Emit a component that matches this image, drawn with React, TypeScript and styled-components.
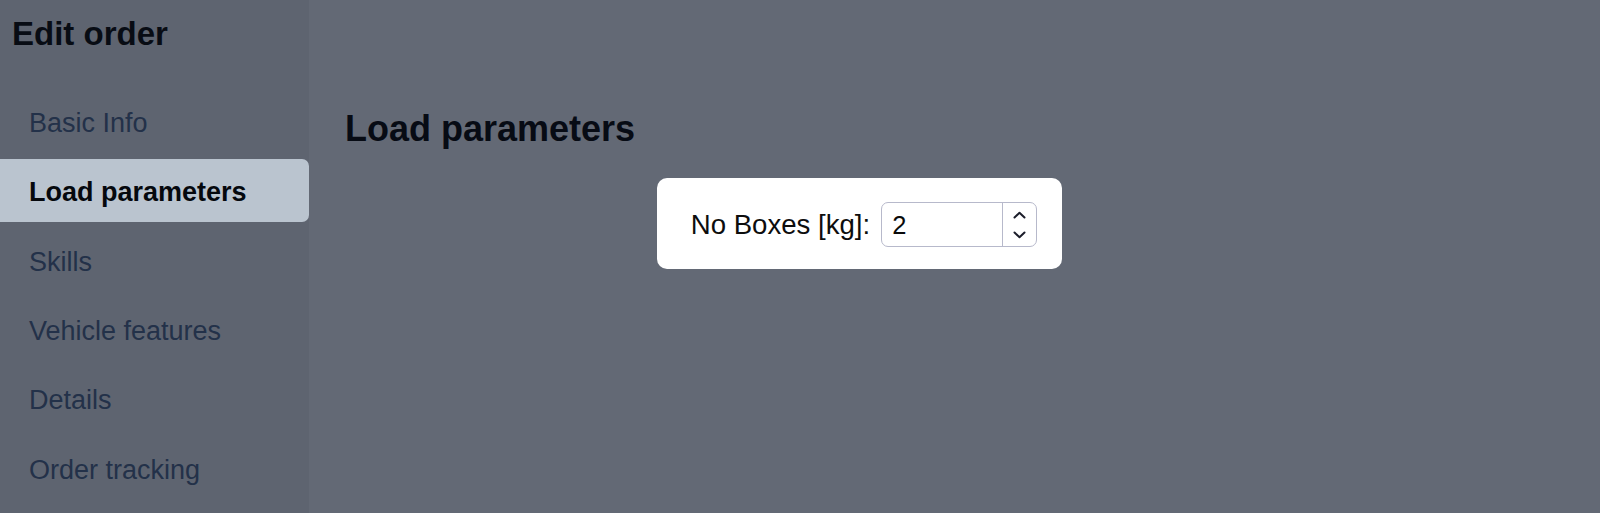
import React from "react";
import styled, { createGlobalStyle } from "styled-components";

const GlobalStyle = createGlobalStyle`
  html, body {
    margin: 0;
    padding: 0;
    height: 100%;
  }
  body {
    font-family: "Liberation Sans", Arial, sans-serif;
    background: #636975;
  }
  #root {
    height: 513px;
  }
`;

const Layout = styled.div`
  display: grid;
  grid-template-columns: 309px 1fr;
  height: 513px;
  overflow: hidden;
`;

const Sidebar = styled.aside`
  background: #5e6470;
  display: flex;
  flex-direction: column;
`;

const SidebarTitle = styled.h1`
  margin: 0;
  padding: 14px 0 0 12px;
  font-size: 33px;
  line-height: 40px;
  font-weight: 700;
  color: #080c14;
`;

const Nav = styled.nav`
  display: flex;
  flex-direction: column;
  gap: 6.3px;
  margin-top: 35.7px;
`;

const NavItem = styled.div<{ $active?: boolean }>`
  height: 63px;
  box-sizing: border-box;
  display: flex;
  align-items: center;
  padding: 5px 0 0 29px;
  font-size: 27px;
  font-weight: ${(p) => (p.$active ? 700 : 400)};
  color: ${(p) => (p.$active ? "#05080d" : "#233149")};
  background: ${(p) => (p.$active ? "#bac4cf" : "transparent")};
  border-radius: 0 7px 7px 0;
`;

const Main = styled.main`
  background: #636975;
  padding: 106.5px 0 0 36px;
`;

const Content = styled.div`
  width: 1029px;
  display: flex;
  flex-direction: column;
  align-items: center;
`;

const Heading = styled.h2`
  align-self: flex-start;
  margin: 0;
  font-size: 36px;
  line-height: 44px;
  font-weight: 700;
  color: #070b14;
`;

const Card = styled.div`
  margin-top: 27.5px;
  background: #ffffff;
  border-radius: 10px;
  padding: 24px 25px 22px 34px;
  display: flex;
  align-items: center;
  gap: 11px;
`;

const Label = styled.label`
  font-size: 27.6px;
  color: #0d0d0d;
`;

const NumberBox = styled.div`
  width: 156px;
  height: 45px;
  box-sizing: border-box;
  border: 1.5px solid #b7b9cb;
  border-radius: 7px;
  display: flex;
  overflow: hidden;
`;

const ValueInput = styled.input`
  flex: 1;
  min-width: 0;
  border: none;
  outline: none;
  padding: 2px 0 0 10px;
  font-family: "Liberation Sans", Arial, sans-serif;
  font-size: 25.5px;
  color: #0a0a0a;
  background: transparent;
`;

const Spinner = styled.div`
  width: 33px;
  border-left: 1.5px solid #b7b9cb;
  display: flex;
  flex-direction: column;
  align-items: center;
  justify-content: center;
  gap: 12px;
`;

const Chevron = ({ down }: { down?: boolean }) => (
  <svg width="13" height="8" viewBox="0 0 13 8" fill="none">
    <path
      d={down ? "M1.5 1.5 L6.5 6.3 L11.5 1.5" : "M1.5 6.5 L6.5 1.7 L11.5 6.5"}
      stroke="#1b1d2a"
      strokeWidth="2"
      strokeLinecap="round"
      strokeLinejoin="round"
    />
  </svg>
);

const items = [
  "Basic Info",
  "Load parameters",
  "Skills",
  "Vehicle features",
  "Details",
  "Order tracking",
];

export default function App() {
  return (
    <>
      <GlobalStyle />
      <Layout>
        <Sidebar>
          <SidebarTitle>Edit order</SidebarTitle>
          <Nav>
            {items.map((it) => (
              <NavItem key={it} $active={it === "Load parameters"}>
                {it}
              </NavItem>
            ))}
          </Nav>
        </Sidebar>
        <Main>
          <Content>
            <Heading>Load parameters</Heading>
            <Card>
              <Label htmlFor="boxes">No Boxes [kg]:</Label>
              <NumberBox>
                <ValueInput id="boxes" type="text" defaultValue="2" />
                <Spinner>
                  <Chevron />
                  <Chevron down />
                </Spinner>
              </NumberBox>
            </Card>
          </Content>
        </Main>
      </Layout>
    </>
  );
}
